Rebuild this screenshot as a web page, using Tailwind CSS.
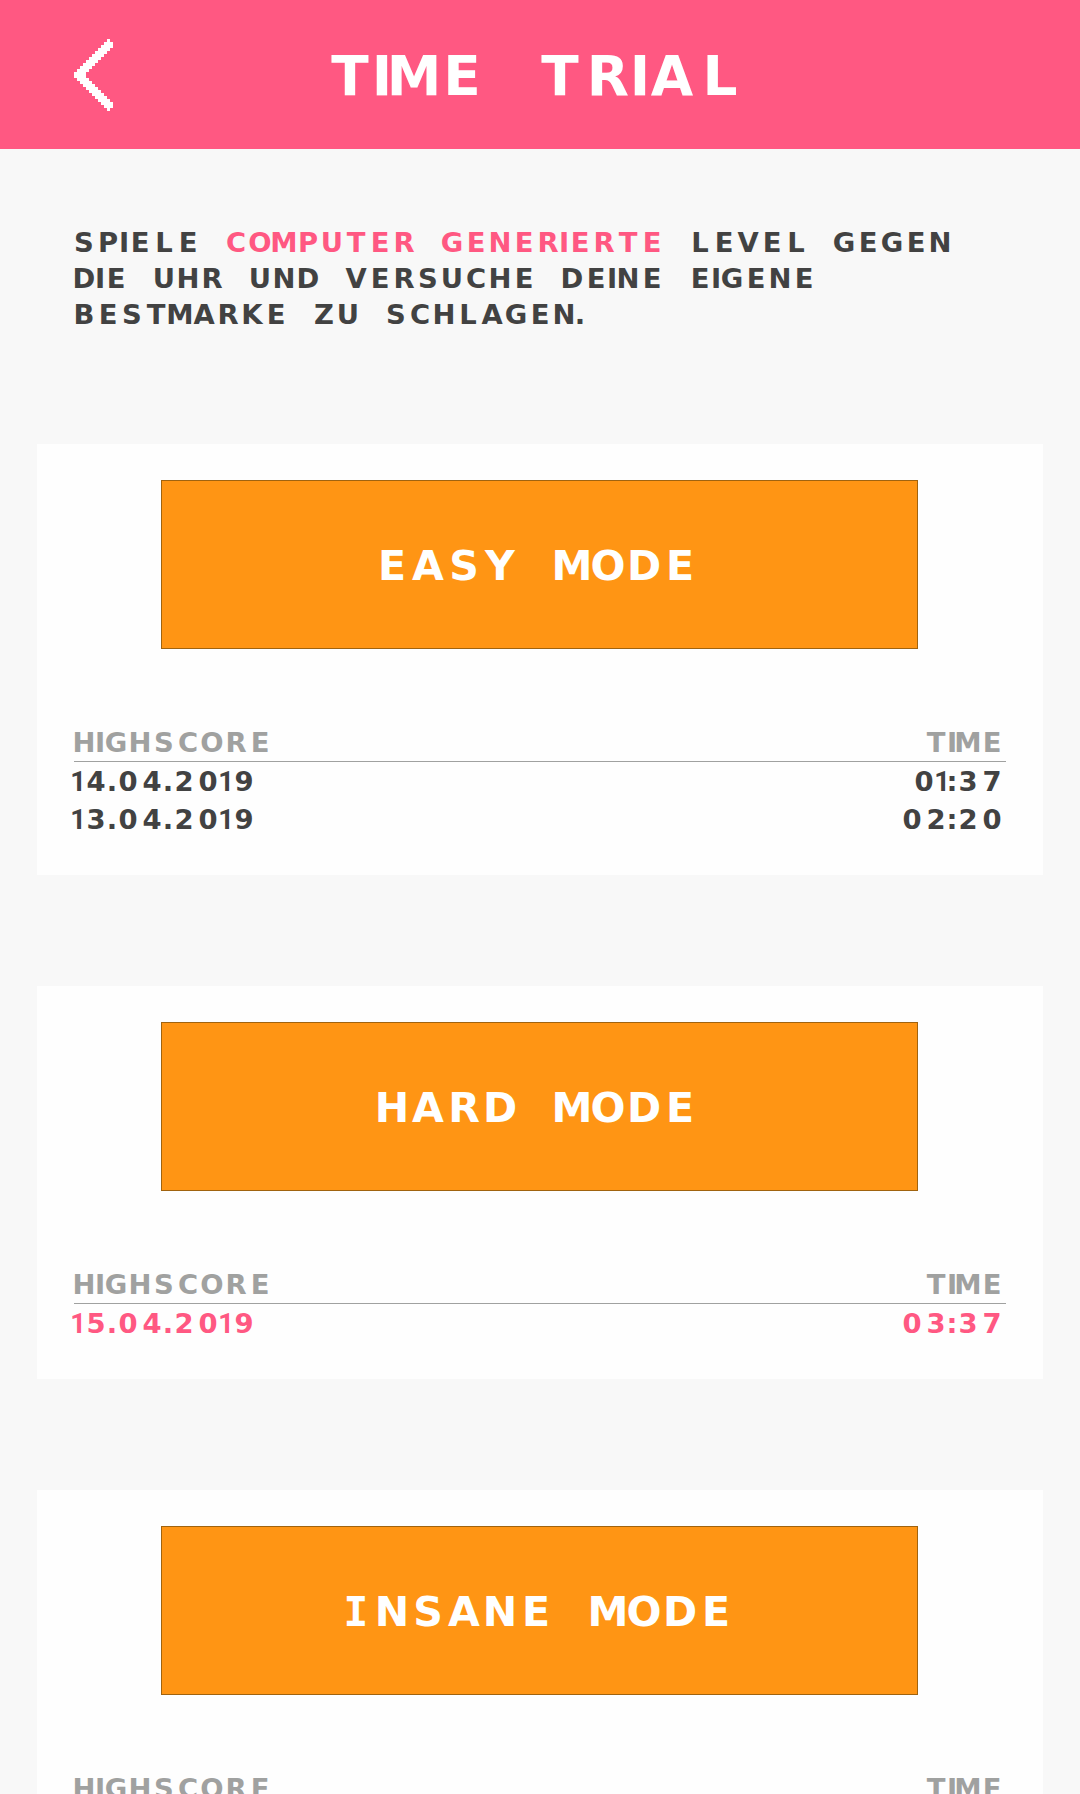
<!DOCTYPE html>
<html lang="de">
<head>
    <meta charset="UTF-8">
    <meta name="viewport" content="width=device-width, initial-scale=1.0">
    <title>Time Trial</title>
    <script src="https://cdn.jsdelivr.net/npm/@tailwindcss/browser@4"></script>
</head>
<body class="bg-[#f8f8f8] font-['DejaVu_Sans',sans-serif] font-bold text-[#424242] h-[1794px] overflow-hidden">
    <!-- Header -->
    <header class="flex items-start h-[149px] bg-[#ff5882] text-white pl-[74px]">
        <svg class="w-[39px] h-[72px] mt-[39px] mr-[217px] shrink-0" viewBox="0 0 13 24" fill="currentColor" shape-rendering="crispEdges">
            <path d="M11 0H12V1H13V3H12V4H11V5H10V6H9V7H8V8H7V9H6V10H5V11H4V13H5V14H6V15H7V16H8V17H9V18H10V19H11V20H12V21H13V23H12V24H11V23H10V22H9V21H8V20H7V19H6V18H5V17H4V16H3V15H2V14H1V13H0V11H1V10H2V9H3V8H4V7H5V6H6V5H7V4H8V3H9V2H10V1H11Z"/>
        </svg>
        <h1 class="mt-[55px]"><svg class="block overflow-visible" data-unit="8" data-space="6.25"><text>TIME TRIAL</text></svg></h1>
    </header>

    <!-- Intro -->
    <div class="flex flex-col gap-4 pt-[83px] pl-[74px] h-[295px]">
        <svg class="block shrink-0 overflow-visible" data-unit="4"><text>SPIELE <tspan class="fill-[#ff5882]">COMPUTER GENERIERTE</tspan> LEVEL GEGEN</text></svg>
        <svg class="block shrink-0 overflow-visible" data-unit="4"><text>DIE UHR UND VERSUCHE DEINE EIGENE</text></svg>
        <svg class="block shrink-0 overflow-visible" data-unit="4"><text>BESTMARKE ZU SCHLAGEN.</text></svg>
    </div>

    <!-- Modes -->
    <main class="flex flex-col gap-[111px] pl-[37px]">
        <section class="w-[1006px] h-[431px] shrink-0 bg-[#fefefe] pt-9 pl-[37px] pr-9">
            <button class="flex items-center justify-center w-[757px] h-[169px] ml-[87px] pr-px bg-[#ff9514] border border-[#a0630f] text-white"><svg class="block overflow-visible" data-unit="6"><text>EASY MODE</text></svg></button>
            <div class="flex justify-between w-[932px] h-[30px] mt-[83px] border-b border-[#a0a1a0] text-[#a0a1a0]">
                <svg class="block overflow-visible" data-unit="4"><text>HIGHSCORE</text></svg>
                <svg class="block overflow-visible" data-unit="4"><text>TIME</text></svg>
            </div>
            <div class="flex justify-between w-[932px] mt-[9px]">
                <svg class="block overflow-visible" data-unit="4"><text>14.04.2019</text></svg>
                <svg class="block overflow-visible" data-unit="4"><text>01:37</text></svg>
            </div>
            <div class="flex justify-between w-[932px] mt-[18px]">
                <svg class="block overflow-visible" data-unit="4"><text>13.04.2019</text></svg>
                <svg class="block overflow-visible" data-unit="4"><text>02:20</text></svg>
            </div>
        </section>

        <section class="w-[1006px] h-[393px] shrink-0 bg-[#fefefe] pt-9 pl-[37px] pr-9">
            <button class="flex items-center justify-center w-[757px] h-[169px] ml-[87px] pr-px bg-[#ff9514] border border-[#a0630f] text-white"><svg class="block overflow-visible" data-unit="6"><text>HARD MODE</text></svg></button>
            <div class="flex justify-between w-[932px] h-[30px] mt-[83px] border-b border-[#a0a1a0] text-[#a0a1a0]">
                <svg class="block overflow-visible" data-unit="4"><text>HIGHSCORE</text></svg>
                <svg class="block overflow-visible" data-unit="4"><text>TIME</text></svg>
            </div>
            <div class="flex justify-between w-[932px] mt-[9px] text-[#ff5882]">
                <svg class="block overflow-visible" data-unit="4"><text>15.04.2019</text></svg>
                <svg class="block overflow-visible" data-unit="4"><text>03:37</text></svg>
            </div>
        </section>

        <section class="w-[1006px] h-[431px] shrink-0 bg-[#fefefe] pt-9 pl-[37px] pr-9">
            <button class="flex items-center justify-center w-[757px] h-[169px] ml-[87px] pr-px bg-[#ff9514] border border-[#a0630f] text-white"><svg class="block overflow-visible" data-unit="6" data-i="5"><text><tspan class="font-['DejaVu_Sans_Mono',monospace]">I</tspan>NSANE MODE</text></svg></button>
            <div class="flex justify-between w-[932px] h-[30px] mt-[83px] border-b border-[#a0a1a0] text-[#a0a1a0]">
                <svg class="block overflow-visible" data-unit="4"><text>HIGHSCORE</text></svg>
                <svg class="block overflow-visible" data-unit="4"><text>TIME</text></svg>
            </div>
        </section>
    </main>

    <script>
        // glyph widths in grid units, everything else is 5 wide
        var narrow = { 'I': 1, '.': 1, ':': 1, '1': 2 };

        // set every letter in the middle of its cell on the grid
        document.querySelectorAll('svg[data-unit]').forEach(function (svg) {
            var unit = Number(svg.dataset.unit);
            var space = Number(svg.dataset.space || 6);
            var text = svg.querySelector('text');
            var pos = 0;
            var xs = [];
            text.textContent.split('').forEach(function (ch) {
                var w = narrow[ch] || 5;
                if (ch === 'I' && svg.dataset.i) w = Number(svg.dataset.i);
                xs.push((pos + w / 2) * unit);
                pos += ch === ' ' ? space : w + 1;
            });
            if (/^\d/.test(text.textContent)) {
                text.innerHTML = text.textContent.replace(/1/g, '<tspan class="font-[Roboto]">1</tspan>');
            }
            text.setAttribute('x', xs.join(' '));
            text.setAttribute('y', 5 * unit);
            text.setAttribute('text-anchor', 'middle');
            text.setAttribute('fill', 'currentColor');
            text.setAttribute('font-size', unit * 6.86);
            svg.setAttribute('width', pos * unit);
            svg.setAttribute('height', 5 * unit);
        });
    </script>
</body>
</html>
